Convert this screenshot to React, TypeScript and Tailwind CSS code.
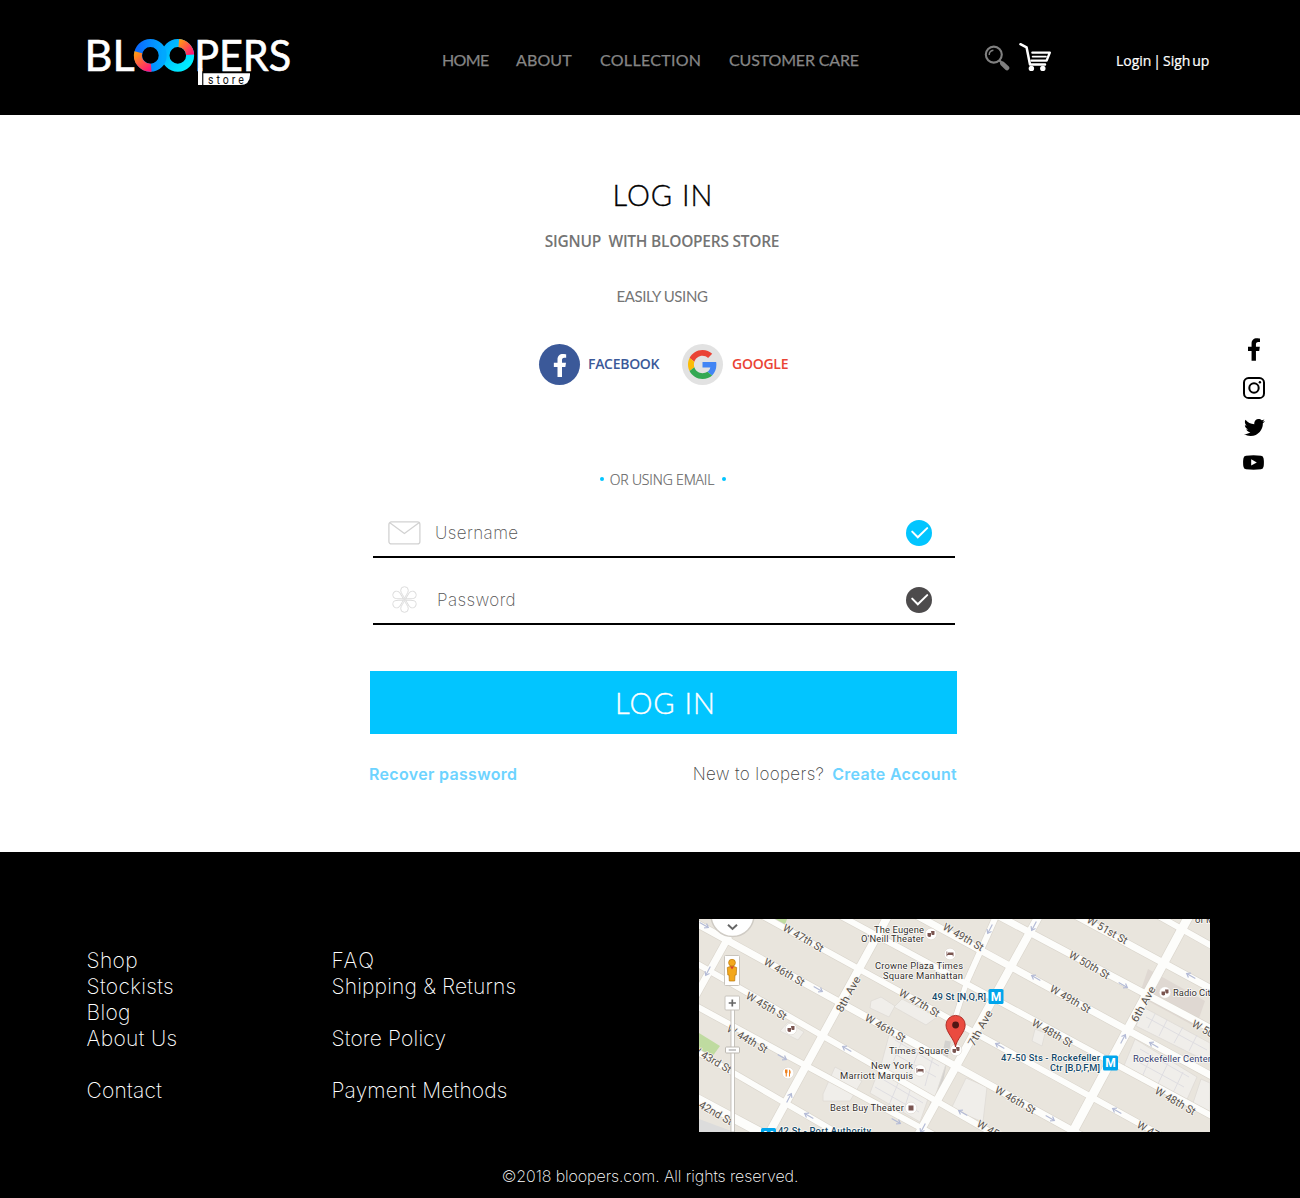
import type { ReactNode } from "react";
import { FaFacebookF, FaTwitter } from "react-icons/fa";

function Logo() {
  return (
    <svg className="block h-[52px] w-[210px] overflow-visible" viewBox="87 36 210 52" role="img" aria-label="Bloopers store">
      <defs>
        <linearGradient id="ringLeft" x1="0" y1="0" x2="1" y2="0">
          <stop offset="0" stopColor="#0a6cff" />
          <stop offset="1" stopColor="#00a8ff" />
        </linearGradient>
        <linearGradient id="ringRight" x1="0" y1="0" x2="1" y2="1">
          <stop offset="0" stopColor="#00a8ff" />
          <stop offset="1" stopColor="#00f4ff" />
        </linearGradient>
        <linearGradient id="warmLeft" gradientUnits="userSpaceOnUse" x1="136" y1="52" x2="150" y2="70">
          <stop offset="0" stopColor="#ff9d12" />
          <stop offset="1" stopColor="#ff1478" />
        </linearGradient>
        <linearGradient id="warmRight" gradientUnits="userSpaceOnUse" x1="178" y1="42" x2="192" y2="54">
          <stop offset="0" stopColor="#ff9d12" />
          <stop offset="1" stopColor="#ff1478" />
        </linearGradient>
      </defs>
      <g fill="#fff" stroke="#fff" strokeWidth="0.6" fontFamily="Lato, sans-serif" fontSize="42.6">
        <text x="84.6" y="70.6" textLength="50" lengthAdjust="spacingAndGlyphs">BL</text>
        <text x="194.2" y="70.6" textLength="97" lengthAdjust="spacingAndGlyphs">PERS</text>
      </g>
      <circle cx="177.8" cy="55.4" r="12.3" fill="none" stroke="url(#ringRight)" strokeWidth="8" />
      <circle cx="150.4" cy="55.4" r="12.3" fill="none" stroke="url(#ringLeft)" strokeWidth="8" />
      <path d="M138.3 52.2A12.3 12.3 0 0 0 151.2 67.7" fill="none" stroke="url(#warmLeft)" strokeWidth="8" />
      <path d="M178.8 43.1A12.3 12.3 0 0 1 190.1 54.8" fill="none" stroke="url(#warmRight)" strokeWidth="8" />
      <rect x="198" y="68" width="4.2" height="17" fill="#fff" />
      <path d="M203.300 73.200H250V75Q250 85 240 85H203.300Z" fill="#fff" />
      <g transform="translate(208 83.8) scale(0.78 1)">
        <text fill="#111" fontFamily="Roboto, sans-serif" fontSize="13.5" textLength="46">store</text>
      </g>
    </svg>
  );
}

function SearchIcon() {
  return (
    <svg className="block h-[26px] w-[26px]" viewBox="984 45 26 26" fill="none" stroke="#808080">
      <circle cx="993.8" cy="54.6" r="8" strokeWidth="2.1" />
      <path d="M989.2 55a4.8 4.8 0 0 1 4.2-4.8" strokeWidth="1.4" />
      <path d="M999.4 60.4l2.4 2.4" strokeWidth="2.2" />
      <path d="M1002.4 63.6l4.6 4.4" strokeWidth="4.6" strokeLinecap="round" />
    </svg>
  );
}

function CartIcon() {
  return (
    <svg className="block h-[30px] w-[34px]" viewBox="1018 42 34 30" fill="none" stroke="#fff" strokeLinecap="round" strokeLinejoin="round">
      <path d="M1020.4 44.2L1026.600 47.4L1030 64.4H1045" strokeWidth="2.5" />
      <path d="M1032.4 52.6H1049.800L1046.6 60.6H1031.5" strokeWidth="2.4" />
      <path d="M1032.6 56.6H1046" strokeWidth="1.700" />
      <circle cx="1031.4" cy="68.4" r="2.7" fill="#fff" stroke="none" />
      <circle cx="1042.800" cy="68.4" r="2.7" fill="#fff" stroke="none" />
    </svg>
  );
}

function GoogleG() {
  return (
    <svg className="block h-[29px] w-[29px]" viewBox="0 0 48 48">
      <path fill="#EA4335" d="M24 9.5c3.54 0 6.71 1.22 9.21 3.6l6.85-6.85C35.9 2.38 30.47 0 24 0 14.62 0 6.51 5.38 2.56 13.22l7.98 6.19C12.43 13.72 17.74 9.5 24 9.5z" />
      <path fill="#4285F4" d="M46.98 24.55c0-1.57-.15-3.09-.38-4.55H24v9.02h12.94c-.58 2.96-2.26 5.48-4.78 7.18l7.73 6c4.51-4.18 7.09-10.36 7.09-17.65z" />
      <path fill="#FBBC05" d="M10.53 28.59c-.48-1.45-.76-2.99-.76-4.59s.27-3.14.76-4.59l-7.98-6.19C.92 16.46 0 20.12 0 24c0 3.88.92 7.54 2.56 10.78l7.97-6.19z" />
      <path fill="#34A853" d="M24 48c6.48 0 11.93-2.13 15.89-5.81l-7.73-6c-2.15 1.45-4.92 2.3-8.16 2.3-6.26 0-11.57-4.22-13.47-9.91l-7.98 6.19C6.51 42.62 14.62 48 24 48z" />
    </svg>
  );
}

function InstagramIcon() {
  return (
    <svg className="block h-[22px] w-[22px]" viewBox="0 0 22 22" fill="none" stroke="#000" strokeWidth="2">
      <rect x="1" y="1" width="20" height="20" rx="4.6" />
      <circle cx="11" cy="11" r="4.7" />
      <circle cx="16.9" cy="5.2" r="1.2" fill="#000" stroke="none" />
    </svg>
  );
}

function YoutubeIcon() {
  return (
    <svg className="block h-[15px] w-[21px]" viewBox="0 0 21 15">
      <path d="M3 .7Q10.500-.3 18 .7Q20.300 1 20.600 3.500Q21.200 7.500 20.600 11.500Q20.300 14 18 14.300Q10.500 15.200 3 14.300Q.7 14 .4 11.500Q-.2 7.500 .4 3.500Q.7 1 3 .7Z" />
      <path d="M8.200 4.300V10.600L13.800 7.450Z" fill="#fff" />
    </svg>
  );
}

function EnvelopeIcon() {
  return (
    <svg className="block h-[24px] w-[33px]" viewBox="0 0 33 24" fill="none" stroke="#d2d2d2" strokeWidth="1.300" strokeLinejoin="round">
      <rect x="0.900" y="0.900" width="31" height="22" rx="2.500" />
      <path d="M1.800 1.800L16.400 12.500L31 1.800" />
    </svg>
  );
}

const petals = [0, 60, 120, 180, 240, 300];

function FlowerIcon() {
  return (
    <svg className="block h-[27px] w-[27px]" viewBox="-13.5 -13.5 27 27" fill="none" stroke="#dcdcdc" strokeWidth="1">
      {petals.map((a) => (
        <path key={a} d="M0 -1C-1 -4 -3.800 -6.500 -3.800 -9.200A3.800 3.600 0 0 1 3.800 -9.200C3.800 -6.500 1 -4 0 -1Z" transform={`rotate(${a})`} />
      ))}
    </svg>
  );
}

function CheckBadge({ fill }: { fill: string }) {
  return (
    <svg className="block size-[26px]" viewBox="0 0 26 26" fill="none">
      <circle cx="13" cy="13" r="13" fill={fill} />
      <path d="M6.200 11.600L11.800 17.300L21.200 8.100" stroke="#fff" strokeWidth="2" strokeLinecap="round" />
    </svg>
  );
}

type Pt = [number, number];
const streets: [Pt, Pt, number][] = [
  [[-5, 43], [300, 218], 6],
  [[-5, 86], [235, 216], 6],
  [[-5, 131], [145, 218], 6],
  [[-5, 178], [70, 218], 9],
  [[-5, 3], [385, 218], 7],
  [[60, -5], [465, 218], 6],
  [[138, -5], [520, 201], 6],
  [[215, -5], [520, 161], 7],
  [[296, -5], [520, 114], 7],
  [[374, -5], [520, 74], 7],
  [[456, -5], [520, 31], 6],
];
const avenues: [Pt, Pt, number][] = [
  [[190, -5], [68, 218], 8],
  [[341, -5], [218, 218], 8],
  [[491, -5], [371, 218], 9],
  [[30, 17], [-5, 80], 7],
  [[298, -5], [268, 62], 6],
  [[268, 62], [252, 112], 5],
];
const streetNames: [string, number, number][] = [
  ["W 47th St", 83, 11], ["W 46th St", 64, 45], ["W 45th St", 46, 79], ["W 44th St", 27, 112],
  ["W 43rd St", -9, 132], ["42nd St", -1, 188], ["W 49th St", 243, 10], ["W 51st St", 387, 3],
  ["W 50th St", 369, 38], ["W 49th St", 350, 72], ["W 48th St", 332, 106], ["W 47th St", 199, 76],
  ["W 46th St", 165, 101], ["W 46th St", 295, 173], ["W 48th St", 455, 174], ["W 50th St", 492, 107],
  ["W 45th St", 277, 207], ["W 47th St", 437, 208],
];
const aveNames: [string, number, number][] = [["8th Ave", 143, 94], ["7th Ave", 275, 128], ["6th Ave", 438, 104]];
const arrows: [number, number, number][] = [
  [5, 6, 30], [119, 70, 30], [83, 138, 30], [148, 130, 210], [110, 197, 210], [197, 202, 30],
  [424, 66, 30], [301, 127, 210], [455, 126, 210], [351, 199, 30], [418, 192, 210], [264, 194, 210], [492, 57, 210],
  [337, 59, 210], [9, 52, 118], [90, 179, -62], [291, 10, 118], [335, 7, 118], [424, 120, -62], [224, 209, 118],
];
const blocks: string[] = [
  "172,82 182,78 196,87 190,98 171,89", "203,80 238,98 227,106 195,88", "190,116 247,145 236,178 181,150",
  "180,150 230,177 221,203 171,174", "136,148 163,162 151,182 124,182 124,175", "81,112 89,103 105,113 99,121",
  "267,159 288,168 284,203 252,190", "336,110 346,114 343,127 333,122", "444,88 511,124 511,144 437,107",
  "436,120 498,158 486,185 424,149", "502,160 511,164 511,195 494,184",
];

function Metro({ x, y }: { x: number; y: number }) {
  return (
    <g>
      <rect x={x} y={y} width="15" height="15" rx="1.500" fill="#00a5ec" />
      <text x={x + 7.5} y={y + 11.7} textAnchor="middle" fill="#fff" fontWeight="700" fontSize="12">M</text>
    </g>
  );
}

function Poi({ x, y, color = "#7a5550", children }: { x: number; y: number; color?: string; children?: ReactNode }) {
  return (
    <g transform={`translate(${x} ${y})`} fill={color}>
      <circle r="5.800" fill="#fff" stroke="#d8d2ca" strokeWidth="0.500" />
      {children ?? <path d="M-3.500 -1H0V2.500Q-2 3.500 -3.500 2ZM0 -3H3.500V.5Q2 1.500 .5 .5Z" />}
    </g>
  );
}

const bed = <path d="M-3.500 -2.500H-2.700V0H-2A1 1 0 1 1 -.2 -.5V-1.500H3.500V2.300H2.700V1H-2.700V2.300H-3.500Z" />;

function CityMap() {
  return (
    <svg className="block h-[213px] w-[511px] font-normal tracking-normal" viewBox="0 0 511 213" fontFamily="Roboto, sans-serif">
      <rect width="511" height="213" fill="#e9e5dd" />
      <path d="M449 50L506 82L497 108L440 77Z" fill="#dfd8d2" />
      <path d="M0 114L21 127L13 138L0 132Z" fill="#bfdba0" />
      <path d="M76 0H88L86 6Z" fill="#bfdba0" />
      <path d="M0 200L35 213H0Z" fill="#dcdcdc" />
      <path d="M249 122L241 163L229 200" stroke="#d3d1ce" strokeWidth="6" fill="none" />
      {blocks.map((p) => (
        <polygon key={p} points={p} fill="#f0eeea" stroke="#dedbd6" strokeWidth="0.800" />
      ))}
      <g stroke="#dcdbe0" strokeWidth="0.900" fill="none">
        <path d="M196 121L240 147M192 133L237 158M205 118L193 145M222 126L210 157M235 134L226 167M180 158L224 184M176 168L220 193M200 162L190 186M212 168L204 194" />
        <path d="M447 98L508 131M456 95L449 109M468 101L460 117M484 108L475 124M498 116L490 132M441 130L490 158M434 140L485 168M453 135L443 158M469 144L458 167M484 153L473 176" />
      </g>
      <g stroke="#d9d4cb">
        {[...streets, ...avenues].map(([a, b, w], i) => (
          <line key={i} x1={a[0]} y1={a[1]} x2={b[0]} y2={b[1]} strokeWidth={w + 1.2} />
        ))}
      </g>
      <g stroke="#fdfdfb">
        {[...streets, ...avenues].map(([a, b, w], i) => (
          <line key={i} x1={a[0]} y1={a[1]} x2={b[0]} y2={b[1]} strokeWidth={w} />
        ))}
      </g>
      <g fill="none" stroke="#b4bbd6" strokeWidth="1.200">
        {arrows.map(([x, y, r], i) => (
          <path key={i} d="M-5 0H5M1.500 -2.500L5 0L1.500 2.500" transform={`translate(${x} ${y}) rotate(${r})`} />
        ))}
      </g>
      <g fontSize="10.800" fill="#58534d" stroke="#f8f6f2" strokeWidth="1.600" paintOrder="stroke" strokeLinejoin="round">
        {streetNames.map(([t, x, y], i) => (
          <text key={i} transform={`translate(${x} ${y}) rotate(30)`} textLength={t.length > 7 ? 45 : 37} lengthAdjust="spacingAndGlyphs">{t}</text>
        ))}
        {aveNames.map(([t, x, y]) => (
          <text key={t} transform={`translate(${x} ${y}) rotate(-61)`} textLength="39" lengthAdjust="spacingAndGlyphs">{t}</text>
        ))}
      </g>
      <g fontSize="9.400" fill="#33302e" stroke="#fbfaf7" strokeWidth="1.600" paintOrder="stroke" strokeLinejoin="round">
        <text x="175" y="14" textLength="50">The Eugene</text>
        <text x="162" y="23.300" textLength="63">O'Neill Theater</text>
        <text x="176" y="50.300" textLength="88">Crowne Plaza Times</text>
        <text x="184" y="59.800" textLength="80">Square Manhattan</text>
        <text x="190" y="134.800" textLength="60">Times Square</text>
        <text x="172" y="150" textLength="42">New York</text>
        <text x="141" y="159.500" textLength="73">Marriott Marquis</text>
        <text x="131" y="192.300" textLength="74">Best Buy Theater</text>
        <text x="474" y="76.700" textLength="42">Radio City</text>
        <text x="496" y="3.500">of M</text>
        <g fill="#35406f">
          <text x="434" y="143" textLength="78">Rockefeller Center</text>
        </g>
        <g fill="#15496a" fontWeight="500">
          <text x="233" y="80.500" textLength="54">49 St [N,Q,R]</text>
          <text x="302" y="142.300" textLength="99">47-50 Sts - Rockefeller</text>
          <text x="351" y="151.800" textLength="50">Ctr [B,D,F,M]</text>
          <text x="79" y="214.500" textLength="93">42 St - Port Authority</text>
        </g>
      </g>
      <Metro x={289.5} y={70} />
      <Metro x={404} y={136.500} />
      <Metro x={62} y={209} />
      <Poi x={232} y={15} />
      <Poi x={251} y={35}>{bed}</Poi>
      <Poi x={92} y={110} />
      <Poi x={221} y={151.500}>{bed}</Poi>
      <Poi x={212} y={189}><rect x="-2.500" y="-2.500" width="5" height="5" /></Poi>
      <Poi x={466} y={73.500} />
      <Poi x={257} y={131} />
      <Poi x={89} y={154} color="#ef8322">
        <path d="M-3 -3.500H-.5V-.5L-1.200 .5V3.500H-2.300V.5L-3 -.5ZM1 -3.500Q3 -3 2.600 .5H2V3.500H1Z" />
      </Poi>
      <path d="M256.500 128C255.500 120 247 113.500 247 106A9.600 9.600 0 0 1 266.200 106C266.200 113.500 257.500 120 256.500 128Z" fill="#ea4b40" stroke="#a8251d" strokeWidth="0.900" />
      <circle cx="256.600" cy="106" r="3.400" fill="#501714" />
      <circle cx="33.500" cy="-4" r="21.500" fill="#fff" stroke="#cfcbc4" strokeWidth="1.500" />
      <path d="M29 5.800L33.500 10L38 5.800" fill="none" stroke="#666" strokeWidth="2" />
      <rect x="32" y="88" width="3.500" height="125" fill="#fff" stroke="#bab6b0" strokeWidth="0.800" />
      <rect x="25.500" y="36.500" width="15" height="30" rx="1" fill="#fff" stroke="#c8c4bd" />
      <g fill="#f3a81c" stroke="#b9780e" strokeWidth="0.700">
        <path d="M28.300 48.500Q33 45.500 37.700 48.500L37.200 56H36L35.700 62H30.300L30 56H28.800Z" />
        <circle cx="33" cy="43.700" r="3.400" />
      </g>
      <path d="M31 47.500H35L33 50.500Z" fill="#db402d" />
      <rect x="26" y="77" width="14.500" height="14" rx="1" fill="#fff" stroke="#c8c4bd" />
      <path d="M29.700 84H36.900M33.300 80.400V87.600" stroke="#666" strokeWidth="1.700" />
      <rect x="26.500" y="128" width="14" height="6" rx="1" fill="#fff" stroke="#bdb9b2" />
      <path d="M29.700 131H37" stroke="#aaa" strokeWidth="1.300" />
    </svg>
  );
}

function Header() {
  return (
    <header className="flex h-[115px] w-full bg-black">
      <div className="mt-9 ml-[87px] w-[355px]">
        <Logo />
      </div>
      <nav className="mt-12 flex w-[542px] font-['Lato',sans-serif] text-[16px] leading-6 whitespace-nowrap text-[#858585] [-webkit-text-stroke:0.25px]">
        <a className="w-[74px] tracking-[-0.6px]">HOME</a>
        <a className="w-[84px] tracking-[0.1px]">ABOUT</a>
        <a className="w-[129px] tracking-[0.3px]">COLLECTION</a>
        <a className="tracking-[-0.15px]">CUSTOMER CARE</a>
      </nav>
      <div className="mt-[42px] flex w-[132px] gap-2">
        <div className="pt-[3px]"><SearchIcon /></div>
        <CartIcon />
      </div>
      <div className="mt-[49px] font-['Open_Sans',sans-serif] text-[14px] leading-6 tracking-[-0.05px] whitespace-nowrap text-white [word-spacing:-1.5px] [-webkit-text-stroke:0.2px]">
        Login | Sigh up
      </div>
    </header>
  );
}

function Field({ icon, label, labelClass, color }: { icon: ReactNode; label: string; labelClass: string; color: string }) {
  return (
    <div className="flex h-[67px] items-end border-b-2 border-black pr-[23px] pb-2.5">
      <div className="flex h-[27px] w-[62px] items-center justify-center pl-px">{icon}</div>
      <div className={labelClass}>{label}</div>
      <div className="ml-auto"><CheckBadge fill={color} /></div>
    </div>
  );
}

function LoginForm() {
  return (
    <main className="flex h-[737px] w-full justify-between bg-white">
      <div className="ml-[370px] w-[587px] whitespace-nowrap">
        <h1 className="mt-[60px] pr-px text-center font-['Lato',sans-serif] text-[29px] leading-10 font-light tracking-[1px] text-black [-webkit-text-stroke:0.35px]">LOG IN</h1>
        <p className="mt-[14px] pr-[3px] text-center font-['Open_Sans',sans-serif] text-[15.5px] leading-6 font-semibold tracking-[-0.25px] text-[#747474]">SIGNUP&nbsp; WITH BLOOPERS STORE</p>
        <p className="mt-[31px] pr-[3px] text-center font-['Lato',sans-serif] text-[15px] leading-6 tracking-[-0.4px] text-[#757575]">EASILY USING</p>
        <div className="mt-9 flex h-10 items-center pl-[169px] font-['Open_Sans',sans-serif] text-[14px] font-semibold">
          <div className="flex size-[41px] items-end justify-center overflow-hidden rounded-full bg-[#3b5999] pb-2">
            <FaFacebookF className="h-[23px] w-4 text-white" />
          </div>
          <span className="ml-2 w-[94px] pb-0.5 tracking-[-0.3px] text-[#3b5999]">FACEBOOK</span>
          <div className="flex size-[41px] items-center justify-center rounded-full bg-[#e2e2e2]"><GoogleG /></div>
          <span className="ml-[9px] pb-0.5 tracking-[-0.25px] text-[#ea4335]">GOOGLE</span>
        </div>
        <div className="mt-[83px] flex h-6 items-center justify-center pr-px">
          <span className="mr-1.5 size-1 rounded-full bg-[#02c5ff]" />
          <span className="font-['Open_Sans',sans-serif] text-[14px] font-light tracking-[-0.15px] text-[#666] [-webkit-text-stroke:0.2px]">OR USING EMAIL</span>
          <span className="ml-2 size-1 rounded-full bg-[#02c5ff]" />
        </div>
        <div className="ml-[3px] w-[582px] font-['Inter',sans-serif] text-[17px] leading-[25px] font-extralight text-[#555]">
          <Field icon={<EnvelopeIcon />} label="Username" labelClass="tracking-[0.4px]" color="#02c5ff" />
          <Field icon={<FlowerIcon />} label="Password" labelClass="pl-0.5 tracking-[0.4px]" color="#4d4b4c" />
        </div>
        <button className="mt-[46px] block h-[63px] w-full bg-[#02c5ff] pl-1 text-center font-['Lato',sans-serif] text-[29px] leading-[61px] font-light tracking-[1px] text-white [-webkit-text-stroke:0.35px]">LOG IN</button>
        <div className="mt-7 -ml-px flex font-['Inter',sans-serif] text-[16px] leading-6 font-semibold text-[#6dd3ff]">
          <a className="tracking-[0.32px]">Recover password</a>
          <span className="ml-auto text-[17px] font-extralight tracking-[0.33px] text-[#444]">New to loopers?</span>
          <a className="ml-2 tracking-[0.3px]">Create Account</a>
        </div>
      </div>
      <aside className="mt-[223px] flex w-[92px] flex-col items-center">
        <FaFacebookF className="h-[23px] w-[14px]" />
        <div className="mt-4"><InstagramIcon /></div>
        <FaTwitter className="mt-[18px] size-[21px]" />
        <div className="mt-[17px] pr-px"><YoutubeIcon /></div>
      </aside>
    </main>
  );
}

function Footer() {
  return (
    <footer className="h-[346px] w-full bg-black font-['Inter',sans-serif] font-extralight whitespace-nowrap text-white">
      <div className="flex h-[280px] text-[21px] leading-[26px] tracking-[0.35px]">
        <ul className="mt-24 ml-[86.5px] w-[245px]">
          <li>Shop</li>
          <li>Stockists</li>
          <li>Blog</li>
          <li>About Us</li>
          <li className="mt-[26px] tracking-[0.2px]">Contact</li>
        </ul>
        <ul className="mt-24 w-[367.5px] tracking-[0.15px]">
          <li className="tracking-[1.6px]">FAQ</li>
          <li>Shipping &amp; Returns</li>
          <li className="mt-[26px]">Store Policy</li>
          <li className="mt-[26px]">Payment Methods</li>
        </ul>
        <div className="mt-[67px]"><CityMap /></div>
      </div>
      <p className="mt-8 text-center text-[16px] leading-6 tracking-[-0.08px]">©2018 bloopers.com. All rights reserved.</p>
    </footer>
  );
}

export default function App() {
  return (
    <div className="h-[1198px] w-[1300px] overflow-hidden bg-white">
      <Header />
      <LoginForm />
      <Footer />
    </div>
  );
}
